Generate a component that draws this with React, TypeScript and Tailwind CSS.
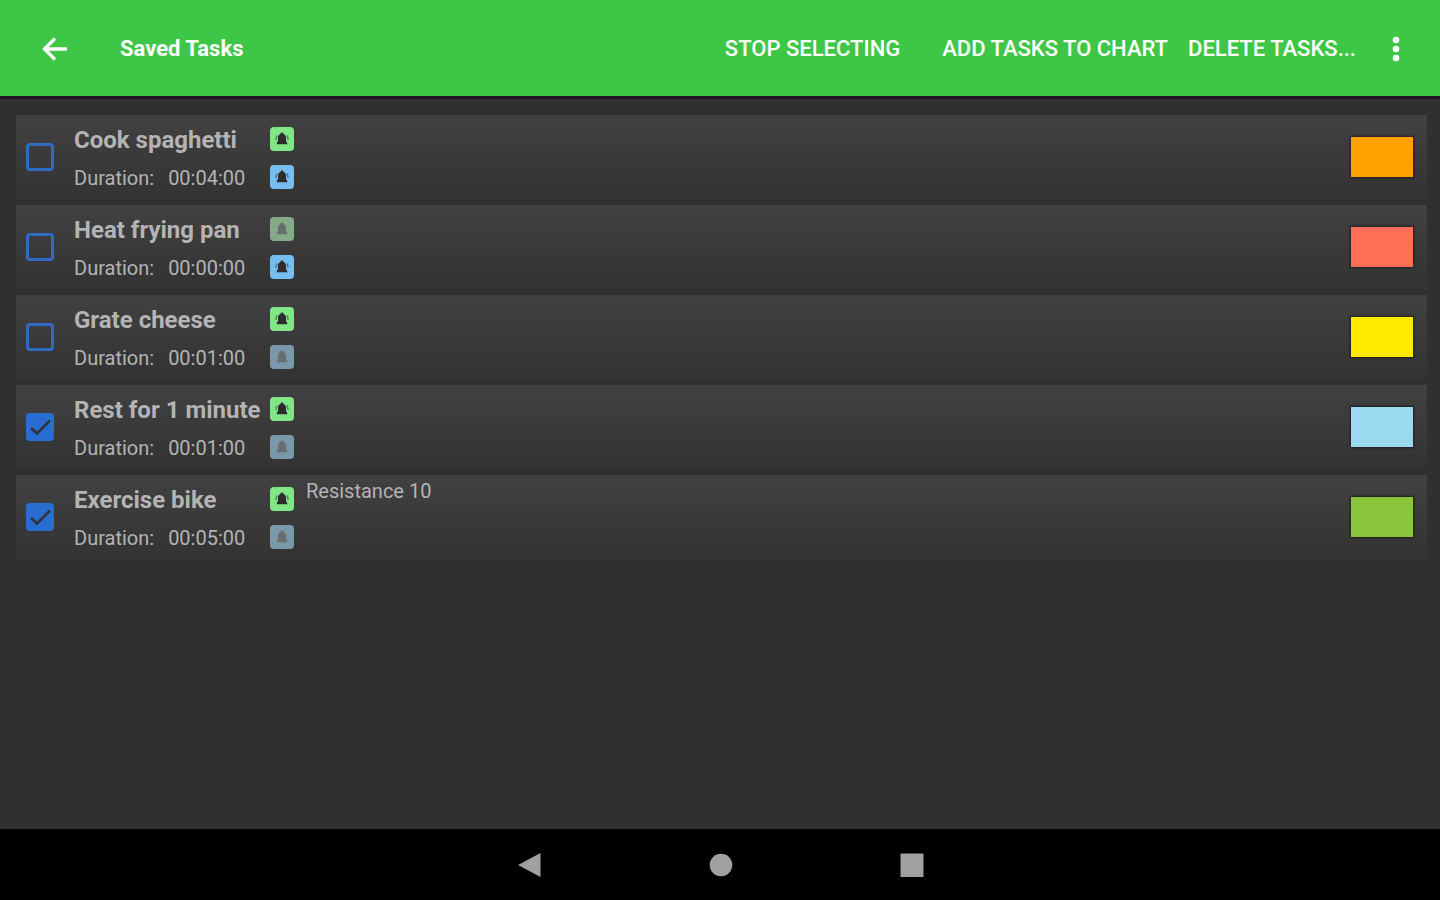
import { useState } from "react";

type Task = {
  name: string;
  duration: string;
  startAlert: boolean;
  endAlert: boolean;
  color: string;
  selected: boolean;
  note?: string;
};

const initialTasks: Task[] = [
  { name: "Cook spaghetti", duration: "00:04:00", startAlert: true, endAlert: true, color: "bg-[#ffa200]", selected: false },
  { name: "Heat frying pan", duration: "00:00:00", startAlert: false, endAlert: true, color: "bg-[#ff6e57]", selected: false },
  { name: "Grate cheese", duration: "00:01:00", startAlert: true, endAlert: false, color: "bg-[#ffea00]", selected: false },
  { name: "Rest for 1 minute", duration: "00:01:00", startAlert: true, endAlert: false, color: "bg-[#9ad9f0]", selected: true },
  { name: "Exercise bike", duration: "00:05:00", startAlert: true, endAlert: false, color: "bg-[#8ac63c]", selected: true, note: "Resistance 10" },
];

function Bell({ active, tone }: { active: boolean; tone: string }) {
  return (
    <span className={`flex size-6 items-center justify-center rounded-sm ${tone}`}>
      <svg viewBox="0 0 24 24" className="size-6" aria-hidden="true">
        <path
          d="M12 5.500c-1 0-1.500.6-1.500 1.400C8.800 7.500 8 8.900 8 10.500v3.700L6.800 15.600v1.600h10.400v-1.600L16 14.200v-3.700c0-1.600-.8-3-2.500-3.600 0-.8-.5-1.400-1.500-1.400z"
          fill={active ? "#2c2c2c" : "#696f70"}
        />
        {active && (
          <g fill="none" stroke="#2c2c2c" strokeOpacity=".5" strokeWidth="1.500">
            <path d="M7.200 8.500c-1 1.300-1.300 2.800-1.200 4.500" />
            <path d="M16.800 8.500c1 1.300 1.300 2.800 1.200 4.500" />
          </g>
        )}
      </svg>
    </span>
  );
}

function TaskRow({ task, onToggle }: { task: Task; onToggle: () => void }) {
  return (
    <li className="flex h-21 items-stretch bg-linear-to-b from-[#414141] to-[#333333] pr-3.5 pl-2.5">
      <label className="flex items-stretch">
        <span className="relative mr-5 flex items-center">
          <input
            type="checkbox"
            checked={task.selected}
            onChange={onToggle}
            className="size-7 appearance-none rounded-sm border-3 border-[#2f6bc2] checked:bg-[#2a6dd2] checked:border-[#2a6dd2]"
          />
          {task.selected && (
            <svg viewBox="0 0 28 28" className="pointer-events-none absolute size-7" aria-hidden="true">
              <path d="M5 15l6 5.500L24 7.500" fill="none" stroke="#303338" strokeWidth="2.500" />
            </svg>
          )}
        </span>
        <span className="flex w-[184px] flex-col pt-1.5 whitespace-nowrap text-[#b4b4b4]">
          <span className="text-[24px] leading-[38px] font-bold">{task.name}</span>
          <span className="flex gap-3.5 text-[20px] leading-[38px]">
            <span>Duration:</span>
            <span>{task.duration}</span>
          </span>
        </span>
      </label>
      <div className="ml-3 flex flex-col gap-3.5 pt-3">
        <Bell active={task.startAlert} tone={task.startAlert ? "bg-[#82e587]" : "bg-[#84aa87]"} />
        <Bell active={task.endAlert} tone={task.endAlert ? "bg-[#78bdef]" : "bg-[#7a98a9]"} />
      </div>
      <p className="ml-3 flex-1 text-[20px] leading-8 text-[#b4b4b4]">{task.note}</p>
      <span className={`h-10 w-[62px] self-center shadow-[0_0_2px_1px_#202024] ${task.color}`} />
    </li>
  );
}

export default function App() {
  const [tasks, setTasks] = useState(initialTasks);
  const toggle = (index: number) =>
    setTasks(tasks.map((t, i) => (i === index ? { ...t, selected: !t.selected } : t)));

  return (
    <div className="flex min-h-screen flex-col bg-[#303030] font-[Roboto,sans-serif]">
      <header className="flex h-[99px] items-center border-b-3 border-[#250f29] bg-[#3ec746] pt-px pr-7 pl-10 text-white">
        <button type="button" aria-label="Back" className="mr-[52px]">
          <svg viewBox="0 0 28 28" className="size-7" aria-hidden="true">
            <path d="M27 14H4M15 3.500L4.500 14L15 24.500" fill="none" stroke="currentColor" strokeWidth="3.300" />
          </svg>
        </button>
        <h1 className="flex-1 text-[22px] font-bold">Saved Tasks</h1>
        <div className="flex items-center text-[22px] font-medium whitespace-nowrap">
          <button type="button" className="mr-[42px]">STOP SELECTING</button>
          <button type="button" className="mr-5">ADD TASKS TO CHART</button>
          <button type="button" className="mr-6">DELETE TASKS...</button>
          <button type="button" aria-label="More options">
            <svg viewBox="0 0 32 32" className="size-8" aria-hidden="true" fill="currentColor">
              <circle cx="16" cy="7" r="3.300" />
              <circle cx="16" cy="16" r="3.300" />
              <circle cx="16" cy="25" r="3.300" />
            </svg>
          </button>
        </div>
      </header>

      <main className="flex-1 pt-4 pr-[13px] pl-4">
        <ul className="flex flex-col gap-1.5">
          {tasks.map((task, i) => (
            <TaskRow key={task.name} task={task} onToggle={() => toggle(i)} />
          ))}
        </ul>
      </main>

      <nav className="flex h-[71px] items-center justify-center gap-[167px] bg-black pl-0.5 text-[#a0a0a0]">
        <button type="button" aria-label="Back">
          <svg viewBox="0 0 24 24" className="size-6" fill="currentColor" aria-hidden="true">
            <path d="M0 12L22.500 0v24z" />
          </svg>
        </button>
        <button type="button" aria-label="Home">
          <svg viewBox="0 0 24 24" className="size-6" fill="currentColor" aria-hidden="true">
            <circle cx="12" cy="12" r="11.300" />
          </svg>
        </button>
        <button type="button" aria-label="Recent apps">
          <svg viewBox="0 0 24 24" className="size-6" fill="currentColor" aria-hidden="true">
            <rect x="0.500" y="0.500" width="23" height="23.500" rx="1" />
          </svg>
        </button>
      </nav>
    </div>
  );
}
